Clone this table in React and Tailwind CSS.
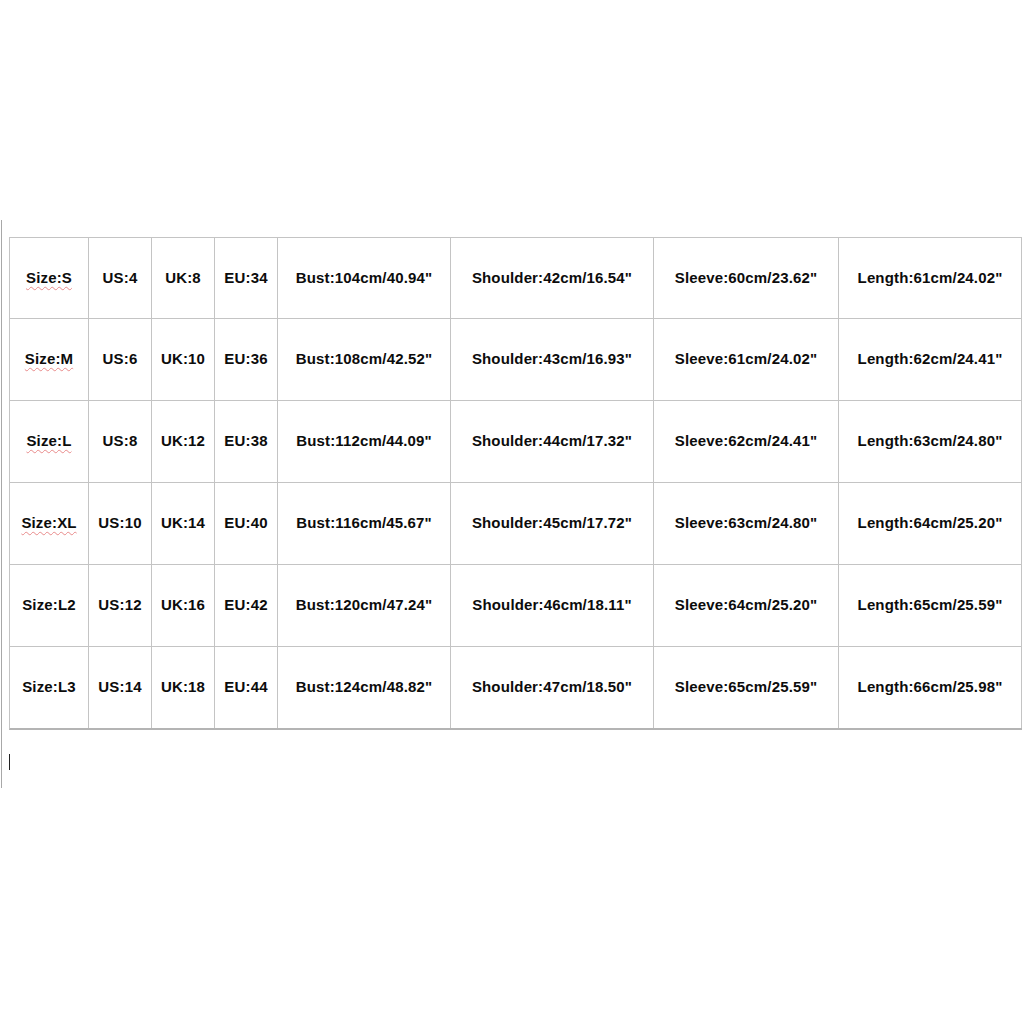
const rows = [
  ["Size:S", "US:4", "UK:8", "EU:34", 'Bust:104cm/40.94"', 'Shoulder:42cm/16.54"', 'Sleeve:60cm/23.62"', 'Length:61cm/24.02"'],
  ["Size:M", "US:6", "UK:10", "EU:36", 'Bust:108cm/42.52"', 'Shoulder:43cm/16.93"', 'Sleeve:61cm/24.02"', 'Length:62cm/24.41"'],
  ["Size:L", "US:8", "UK:12", "EU:38", 'Bust:112cm/44.09"', 'Shoulder:44cm/17.32"', 'Sleeve:62cm/24.41"', 'Length:63cm/24.80"'],
  ["Size:XL", "US:10", "UK:14", "EU:40", 'Bust:116cm/45.67"', 'Shoulder:45cm/17.72"', 'Sleeve:63cm/24.80"', 'Length:64cm/25.20"'],
  ["Size:L2", "US:12", "UK:16", "EU:42", 'Bust:120cm/47.24"', 'Shoulder:46cm/18.11"', 'Sleeve:64cm/25.20"', 'Length:65cm/25.59"'],
  ["Size:L3", "US:14", "UK:18", "EU:44", 'Bust:124cm/48.82"', 'Shoulder:47cm/18.50"', 'Sleeve:65cm/25.59"', 'Length:66cm/25.98"'],
];

const heights = ["h-[81px]", "h-[82px]", "h-[82px]", "h-[82px]", "h-[82px]", "h-[81px]"];

export default function App() {
  return (
    <div
      className="w-[1024px] h-[1024px] bg-white pt-[220px] flex text-[#0c0c0c]"
      style={{ fontFamily: '"Liberation Sans", Arial, sans-serif' }}
    >
      <div className="ml-[1px] w-[1px] h-[568px] bg-[#a8a8a8]" />
      <div className="ml-[7px] pt-[17px] flex flex-col">
        <div className="grid grid-cols-[79px_63px_63px_63px_173px_203px_185px_183px] border-l border-t border-[#c4c4c4] border-b-2 border-b-[#b4b4b4]">
          {rows.map((r, ri) =>
            r.map((c, ci) => (
              <div
                key={ri + "-" + ci}
                className={`${heights[ri]} flex items-center justify-center border-r border-[#c4c4c4] text-[15px] font-bold tracking-[0.15px] ${ri < 5 ? "border-b" : ""}`}
              >
                {ci === 0 && ri < 4 ? (
                  <span className="underline decoration-wavy decoration-[#e88a8a] decoration-1 underline-offset-[3px]">
                    {c}
                  </span>
                ) : (
                  <span>{c}</span>
                )}
              </div>
            ))
          )}
        </div>
        <div className="mt-[24px] w-[1px] h-[16px] bg-[#222]" />
      </div>
    </div>
  );
}
